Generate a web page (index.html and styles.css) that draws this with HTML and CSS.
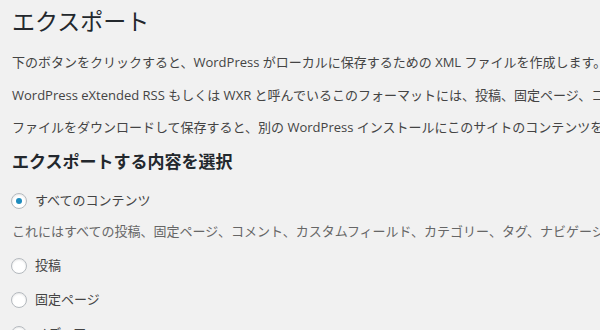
FILE: index.html
```html
<!DOCTYPE html>
<html lang="ja">
<head>
<meta charset="utf-8">
<title>エクスポート</title>
<link rel="stylesheet" href="styles.css">
</head>
<body>
<div class="wrap">
  <h1 class="page-title">エクスポート</h1>
  <p class="intro">下のボタンをクリックすると、WordPress がローカルに保存するための XML ファイルを作成します。</p>
  <p class="intro">WordPress eXtended RSS もしくは WXR と呼んでいるこのフォーマットには、投稿、固定ページ、コメント、カスタムフィールド、カテゴリー、タグが含まれます。</p>
  <p class="intro">ファイルをダウンロードして保存すると、別の WordPress インストールにこのサイトのコンテンツをインポートすることができます。</p>
  <h2 class="section-title">エクスポートする内容を選択</h2>
  <fieldset class="choices">
    <label class="choice first">
      <span class="radio checked"></span>
      <span class="choice-label">すべてのコンテンツ</span>
    </label>
    <p class="description">これにはすべての投稿、固定ページ、コメント、カスタムフィールド、カテゴリー、タグ、ナビゲーションメニュー、カスタム投稿が含まれます。</p>
    <label class="choice">
      <span class="radio"></span>
      <span class="choice-label">投稿</span>
    </label>
    <label class="choice">
      <span class="radio"></span>
      <span class="choice-label">固定ページ</span>
    </label>
    <label class="choice">
      <span class="radio"></span>
      <span class="choice-label">メディア</span>
    </label>
  </fieldset>
</div>
</body>
</html>
```
FILE: styles.css
```css
html, body {
  margin: 0;
  padding: 0;
  background: #f1f1f1;
  overflow: hidden;
}

body {
  font-family: "Open Sans", "Noto Sans CJK JP", sans-serif;
  font-size: 13px;
  color: #444;
}

.wrap {
  padding-left: 12px;
  white-space: nowrap;
}

.page-title {
  margin: 0;
  padding-top: 7px;
  font-size: 23px;
  font-weight: 400;
  line-height: 29px;
  color: #23282d;
}

.intro {
  margin: 13px 0 0;
  line-height: 19.5px;
}

.intro:first-of-type {
  margin-top: 17px;
}

.section-title {
  margin: 13.5px 0 0;
  font-size: 17px;
  font-weight: 700;
  line-height: 22px;
  color: #23282d;
}

.choices {
  margin: 0;
  padding: 0;
  border: 0;
  display: flex;
  flex-direction: column;
}

.choice {
  display: flex;
  align-items: center;
  gap: 8px;
  height: 21px;
  margin-top: 13px;
  margin-left: -1px;
}

.choice.first {
  margin-top: 17px;
}

.radio {
  box-sizing: border-box;
  width: 16px;
  height: 16px;
  border: 1px solid #b4b9be;
  border-radius: 50%;
  background: #fff;
  box-shadow: inset 0 1px 2px rgba(0, 0, 0, 0.1);
  display: flex;
  align-items: center;
  justify-content: center;
}

.radio.checked::before {
  content: "";
  width: 6px;
  height: 6px;
  border-radius: 50%;
  background: #1e8cbe;
}

.choice-label {
  line-height: 19.5px;
  color: #444;
}

.description {
  margin: 10.5px 0 0;
  line-height: 19.5px;
  color: #666;
}

.description + .choice {
  margin-top: 14px;
}
```
